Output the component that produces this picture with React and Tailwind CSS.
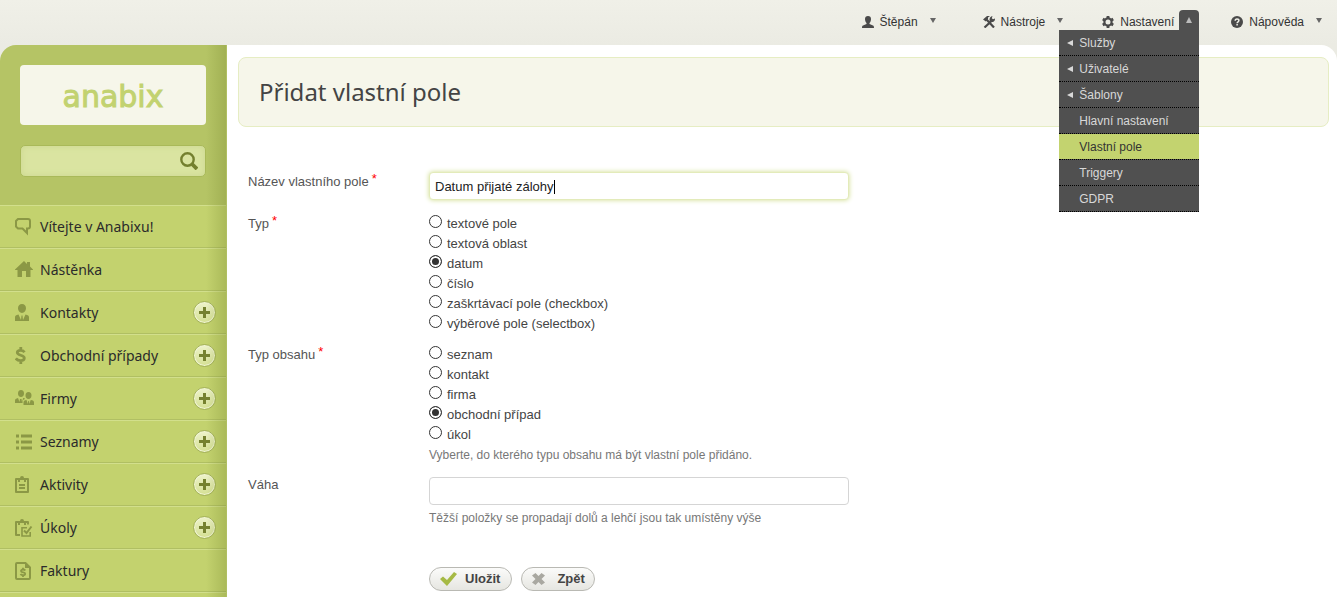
import { useState } from "react";

const ICONS = {
  chat: (
    <path
      d="M3 1h10q2 0 2 2v5.500q0 2-2 2h-1V15l-4.500-4.500H3L1 8.500V3Z"
      fill="none"
      stroke="currentColor"
      strokeWidth="2"
    />
  ),
  home: <path d="M9 0 0 8.500V9h2.500v7H7v-6h4v6h4.500V9H18v-.500L15 5.500V1h-3v2L9 0Z" />,
  person: (
    <path d="M7 0c2.500 0 4 1.800 4 4.300S9.300 9 7 9 3 6.800 3 4.300 4.500 0 7 0ZM0 17v-3.500c0-1.800 1-2.500 3.500-3L6 16l.500-4.500h1L8 16l2.500-5.500c2.500.500 3.500 1.200 3.500 3V17H0Z" />
  ),
  dollar: (
    <path
      d="M9.500 5.200C8.500 3.800 7.200 3.300 5.500 3.300c-1.800 0-3.200.700-3.200 2.300 0 3.400 7 1.900 7 5.500 0 1.700-1.600 2.600-3.700 2.600-2 0-3.600-.700-4.800-2.300M5.800 0v3.500M5.800 13.500V17"
      fill="none"
      stroke="currentColor"
      strokeWidth="2.800"
    />
  ),
  people: (
    <>
      <path d="M6 0c2 0 3 1.500 3 3.500S7.800 7 6 7 3 5.500 3 3.500 4 0 6 0ZM0 13v-2.500C0 9 1 8.500 3 8l1.500 4L5 9h1.500l.500 3 1.200-4c1 0 1.500.300 1.800 1-2 .500-2.500 1.500-2.500 4H0Z" />
      <path d="M13.500 2c2 0 3 1.500 3 3.500S15.300 9 13.500 9s-3-1.500-3-3.500 1-3.500 3-3.500ZM8.500 15v-2.500c0-1.500 1-2.200 3-2.500l1.300 4 .400-3h.800l.400 3 1.300-4c2.300.300 3.300 1 3.300 2.500V15H8.500Z" />
    </>
  ),
  list: (
    <path d="M1 1.500h3v3H1ZM6 1.500h11v3H6ZM1 7.500h3v3H1ZM6 7.500h11v3H6ZM1 13.500h3v3H1ZM6 13.500h11v3H6Z" />
  ),
  clipboard: (
    <>
      <path
        d="M1 3h12v13H1Z"
        fill="none"
        stroke="currentColor"
        strokeWidth="2"
        strokeLinejoin="round"
      />
      <path d="M3 6V2h2q0-2 2-2t2 2h2v4H9V4H5v2ZM4 8h6v2H4ZM4 11h6v2H4Z" />
    </>
  ),
  task: (
    <>
      <path
        d="M5 16H1V3h12v2.500"
        fill="none"
        stroke="currentColor"
        strokeWidth="2"
        strokeLinejoin="round"
      />
      <path d="M3 6V2h2q0-2 2-2t2 2h2v4H9V4H5v2Z" />
      <path
        d="M12 8.800H7V17h8.200v-4"
        fill="none"
        stroke="currentColor"
        strokeWidth="1.600"
      />
      <path
        d="m9 11.500 2.500 2.500L16.500 7.500"
        fill="none"
        stroke="currentColor"
        strokeWidth="2"
      />
    </>
  ),
  invoice: (
    <>
      <path
        d="M2 1h8.500L15 5.500V16q0 1-1 1H2q-1 0-1-1V2q0-1 1-1Z"
        fill="none"
        stroke="currentColor"
        strokeWidth="2"
      />
      <path d="M10 1v5h5Z" />
      <path
        d="M10.300 8.500C9.800 7.800 9 7.500 8 7.500s-2 .500-2 1.500c0 1.900 4.200.900 4.200 2.800 0 1-1 1.400-2.200 1.400s-2-.400-2.500-1.200M8 5.800v2M8 13v2"
        fill="none"
        stroke="currentColor"
        strokeWidth="1.800"
      />
    </>
  ),
};

const NAV = [
  { label: "Vítejte v Anabixu!", icon: "chat" },
  { label: "Nástěnka", icon: "home" },
  { label: "Kontakty", icon: "person", add: true },
  { label: "Obchodní případy", icon: "dollar", add: true },
  { label: "Firmy", icon: "people", add: true },
  { label: "Seznamy", icon: "list", add: true },
  { label: "Aktivity", icon: "clipboard", add: true },
  { label: "Úkoly", icon: "task", add: true },
  { label: "Faktury", icon: "invoice" },
];

const SETTINGS = [
  { label: "Služby", sub: true },
  { label: "Uživatelé", sub: true },
  { label: "Šablony", sub: true },
  { label: "Hlavní nastavení" },
  { label: "Vlastní pole", active: true },
  { label: "Triggery" },
  { label: "GDPR" },
];

const FIELD_TYPES = [
  "textové pole",
  "textová oblast",
  "datum",
  "číslo",
  "zaškrtávací pole (checkbox)",
  "výběrové pole (selectbox)",
];

const CONTENT_TYPES = ["seznam", "kontakt", "firma", "obchodní případ", "úkol"];

function TopItem({ icon, label, open, children }) {
  return (
    <div className="relative flex h-5">
      <button
        type="button"
        aria-expanded={!!open}
        className="flex h-5 items-center text-[#333]"
      >
        <svg
          viewBox="0 0 12 12"
          className="mt-1 mr-1.5 h-3 w-3 fill-[#4a4a4a] text-[#4a4a4a]"
        >
          {icon}
        </svg>
        <span className="mt-1 mr-[5px] leading-5">{label}</span>
        <span
          className={
            open
              ? "flex h-5 w-5 items-center justify-center rounded-t bg-[#505050]"
              : "flex h-5 w-5 items-center justify-center"
          }
        >
          <svg
            viewBox="0 0 6 6"
            className={open ? "h-1.5 w-1.5 fill-[#bbb]" : "h-1.5 w-1.5 fill-[#666]"}
          >
            <path d={open ? "M3 0 6 6H0Z" : "M0 1h6L3 6Z"} />
          </svg>
        </span>
      </button>
      {children}
    </div>
  );
}

function TopBar() {
  return (
    <header className="flex h-[45px] justify-end bg-linear-to-b from-[#f0f0e8] to-[#ebebe3] pt-2.5 pr-2 text-xs">
      <div className="mr-10">
        <TopItem
          label="Štěpán"
          icon={
            <path d="M6 0c2 0 3 1.200 3 3 0 1.500-.500 3-1.500 4v1L11 9.500c.700.400 1 1 1 2.500H0c0-1.500.300-2.100 1-2.500L4.500 8V7C3.500 6 3 4.500 3 3c0-1.800 1-3 3-3Z" />
          }
        />
      </div>
      <div className="mr-8">
        <TopItem
          label="Nástroje"
          icon={
            <>
              <path
                d="m3 3 8 8.500M8.500 5 1.500 11.500"
                fill="none"
                stroke="currentColor"
                strokeWidth="2.200"
              />
              <path d="M0 3.500 4 0h3L5 1.500 5 3 2.500 5.500 1.500 4.500Z" />
              <path d="M9.500 0 8.800 2.200 10 3.300 12 2.500c.200 2.300-1.500 4-4 3.500L6.500 4.500C6.300 2 7.500.300 9.500 0Z" />
            </>
          }
        />
      </div>
      <div className="mr-8">
        <TopItem
          label="Nastavení"
          open
          icon={
            <>
              <circle
                cx="6"
                cy="6"
                r="3.600"
                fill="none"
                stroke="currentColor"
                strokeWidth="2.200"
              />
              <path
                d="M6 0v2M6 10v2M.800 3l1.700 1M9.500 8l1.700 1M.800 9l1.700-1M9.500 4l1.700-1"
                stroke="currentColor"
                strokeWidth="2.800"
              />
            </>
          }
        >
          <ul className="absolute top-5 right-0 z-10 w-[140px] bg-[#505050]">
            {SETTINGS.map((item) => (
              <li key={item.label} className="border-b border-dotted border-black">
                <a
                  href="#"
                  className={
                    item.active
                      ? "flex h-[25px] items-center bg-[#c3d36f] pl-2 text-[#333]"
                      : "flex h-[25px] items-center pl-2 text-[#d8d8d8]"
                  }
                >
                  <span className="w-3">
                    {item.sub && (
                      <svg viewBox="0 0 6 6" className="h-1.5 w-1.5 fill-[#d8d8d8]">
                        <path d="M6 0v6L0 3Z" />
                      </svg>
                    )}
                  </span>
                  {item.label}
                </a>
              </li>
            ))}
          </ul>
        </TopItem>
      </div>
      <TopItem
        label="Nápověda"
        icon={
          <>
            <circle cx="6" cy="6" r="6" />
            <path
              d="M4.200 4.800C4.200 3.500 5 3 6 3s1.900.600 1.900 1.600C7.900 5.900 6.100 5.800 6.100 7.200M6.100 8v1.500"
              fill="none"
              stroke="#efefe8"
              strokeWidth="1.500"
            />
          </>
        }
      />
    </header>
  );
}

function Sidebar() {
  return (
    <aside className="relative w-[227px] shrink-0 overflow-hidden rounded-tl-2xl border-r border-[#b0bf62] bg-[#b5c465] font-['Noto_Sans',sans-serif]">
      <div className="flex h-40 flex-col pt-5 pr-5 pl-5">
        <a
          href="#"
          className="flex h-[60px] items-center justify-center rounded bg-[#f6f6ea] pt-1 font-['DejaVu_Sans',sans-serif] text-[30px] leading-none text-[#c2d270] [-webkit-text-stroke:1px_#c2d270]"
        >
          anabix
        </a>
        <form className="mt-5 flex h-8 items-center rounded-[5px] border border-[#a9b959] bg-[#dae4a1] pr-[7px] shadow-[inset_0_0_6px_#cbd78e]">
          <input
            type="search"
            aria-label="Hledat"
            className="h-full min-w-0 flex-1 bg-transparent px-2 text-sm outline-none"
          />
          <button type="button" aria-label="Hledat">
            <svg
              viewBox="0 0 18 18"
              className="h-[18px] w-[18px] fill-none stroke-[#74802f]"
            >
              <circle cx="7.500" cy="7.500" r="6.200" strokeWidth="2.400" />
              <path d="m12 12 5 5" strokeWidth="3.800" />
            </svg>
          </button>
        </form>
      </div>
      <nav>
        <ul>
          {NAV.map((item) => (
            <li
              key={item.label}
              className="flex h-[43px] items-center border-t border-b border-t-[#d2df8c] border-b-[#b0bf63] bg-[#c3d26e] pr-2.5 pl-[15px]"
            >
              <a
                href="#"
                className="flex flex-1 items-center text-sm text-[#2b2b2b]"
              >
                <span className="w-[25px] text-[#8b9845]">
                  <svg viewBox="0 -1 20 19" className="h-[19px] w-5 fill-current">
                    {ICONS[item.icon]}
                  </svg>
                </span>
                {item.label}
              </a>
              {item.add && (
                <button
                  type="button"
                  aria-label={`Přidat: ${item.label}`}
                  className="flex h-[23px] w-[23px] items-center justify-center rounded-full border border-[#a5b35b] bg-linear-to-b from-[#eef3cb] to-[#d5e093] shadow-[inset_0_0_0_1px_#f0f4d4]"
                >
                  <svg viewBox="0 0 11 11" className="h-[11px] w-[11px] fill-[#75812f]">
                    <path d="M4 0h3v4h4v3H7v4H4V7H0V4h4Z" />
                  </svg>
                </button>
              )}
            </li>
          ))}
        </ul>
      </nav>
      <div className="h-5 border-t border-[#d2df8c] bg-[#c3d26e]" />
      <div className="pointer-events-none absolute inset-y-0 right-0 w-5 bg-linear-to-r from-transparent to-[#7a8a3055]" />
    </aside>
  );
}

function Required() {
  return <span className="ml-[3px] align-[3px] leading-none text-[#f00]">*</span>;
}

function RadioGroup({ name, options, value, onChange }) {
  return options.map((option) => (
    <label key={option} className="flex h-5 text-[13px] leading-5 text-[#444]">
      <input
        type="radio"
        name={name}
        checked={value === option}
        onChange={() => onChange(option)}
        className="mt-px mr-[5px] h-[13px] w-[13px] appearance-none rounded-full border border-[#333] bg-white checked:bg-[#333] checked:shadow-[inset_0_0_0_2px_white]"
      />
      {option}
    </label>
  ));
}

function AddFieldForm() {
  const [name, setName] = useState("Datum přijaté zálohy");
  const [type, setType] = useState("datum");
  const [content, setContent] = useState("obchodní případ");
  const [weight, setWeight] = useState("");

  return (
    <form className="px-2.5 pt-[45px] text-[13px] text-[#555]">
      <div className="flex">
        <label htmlFor="name" className="w-[181px] shrink-0 leading-4">
          Název vlastního pole
          <Required />
        </label>
        <div className="relative w-full max-w-[420px]">
          <input
            id="name"
            value={name}
            onChange={(e) => setName(e.target.value)}
            className="block h-7 w-full rounded border border-[#e3ebba] bg-white px-[5px] text-[#222] shadow-[0_0_5px_#cfdc8c] outline-none"
          />
          <span
            aria-hidden="true"
            className="absolute top-2 left-[125px] h-3.5 w-px bg-black"
          />
        </div>
      </div>
      <fieldset className="mt-3.5 flex">
        <legend className="float-left w-[181px] shrink-0 leading-4">
          Typ
          <Required />
        </legend>
        <div>
          <RadioGroup name="type" options={FIELD_TYPES} value={type} onChange={setType} />
        </div>
      </fieldset>
      <fieldset className="mt-[11px] flex">
        <legend className="float-left w-[181px] shrink-0 leading-4">
          Typ obsahu
          <Required />
        </legend>
        <div>
          <RadioGroup
            name="content"
            options={CONTENT_TYPES}
            value={content}
            onChange={setContent}
          />
          <p className="text-xs leading-5 text-[#777]">
            Vyberte, do kterého typu obsahu má být vlastní pole přidáno.
          </p>
        </div>
      </fieldset>
      <div className="mt-3 flex">
        <label htmlFor="weight" className="w-[181px] shrink-0 leading-4">
          Váha
        </label>
        <div className="w-full max-w-[420px]">
          <input
            id="weight"
            value={weight}
            onChange={(e) => setWeight(e.target.value)}
            className="block h-7 w-full rounded border border-[#d5d5d5] bg-white px-[5px] outline-none"
          />
          <p className="mt-[3px] text-xs leading-5 text-[#777]">
            Těžší položky se propadají dolů a lehčí jsou tak umístěny výše
          </p>
        </div>
      </div>
      <div className="mt-[39px] ml-[181px] flex gap-[9px] font-bold text-[#444]">
        <button
          type="button"
          className="flex h-6 items-center rounded-full border border-[#b9b9b3] bg-linear-to-b from-[#fbfbfa] to-[#e6e6e1] pr-[11px] pl-2.5"
        >
          <svg viewBox="0 0 17 14" className="mr-2 h-3.5 w-[17px] fill-[#a6ba45]">
            <path d="m0 7 3-2.500 4 3.500L14 0l3 2L7 14Z" />
          </svg>
          Uložit
        </button>
        <button
          type="button"
          className="flex h-6 items-center rounded-full border border-[#b9b9b3] bg-linear-to-b from-[#fbfbfa] to-[#e6e6e1] pr-[9px] pl-2.5"
        >
          <svg viewBox="0 0 13 12" className="mr-3 h-3 w-[13px] fill-[#a9a8a1]">
            <path d="m3.500 0 3 3 3-3L13 2.500 9.500 6 13 9.500 9.500 12l-3-3-3 3L0 9.500 3.500 6 0 2.500Z" />
          </svg>
          Zpět
        </button>
      </div>
    </form>
  );
}

export default function App() {
  return (
    <div className="flex h-screen flex-col overflow-hidden bg-[#ebebe3] font-['Liberation_Sans',Arial,sans-serif]">
      <TopBar />
      <div className="flex min-h-0 flex-1">
        <Sidebar />
        <main className="min-w-0 flex-1 rounded-tr-2xl bg-white pt-3 pr-2 pl-[11px]">
          <h1 className="flex h-[70px] items-center rounded-lg border border-[#e6edc3] bg-[#f6f6ea] px-5 font-['Noto_Sans',sans-serif] text-2xl text-[#444]">
            Přidat vlastní pole
          </h1>
          <AddFieldForm />
        </main>
      </div>
    </div>
  );
}
